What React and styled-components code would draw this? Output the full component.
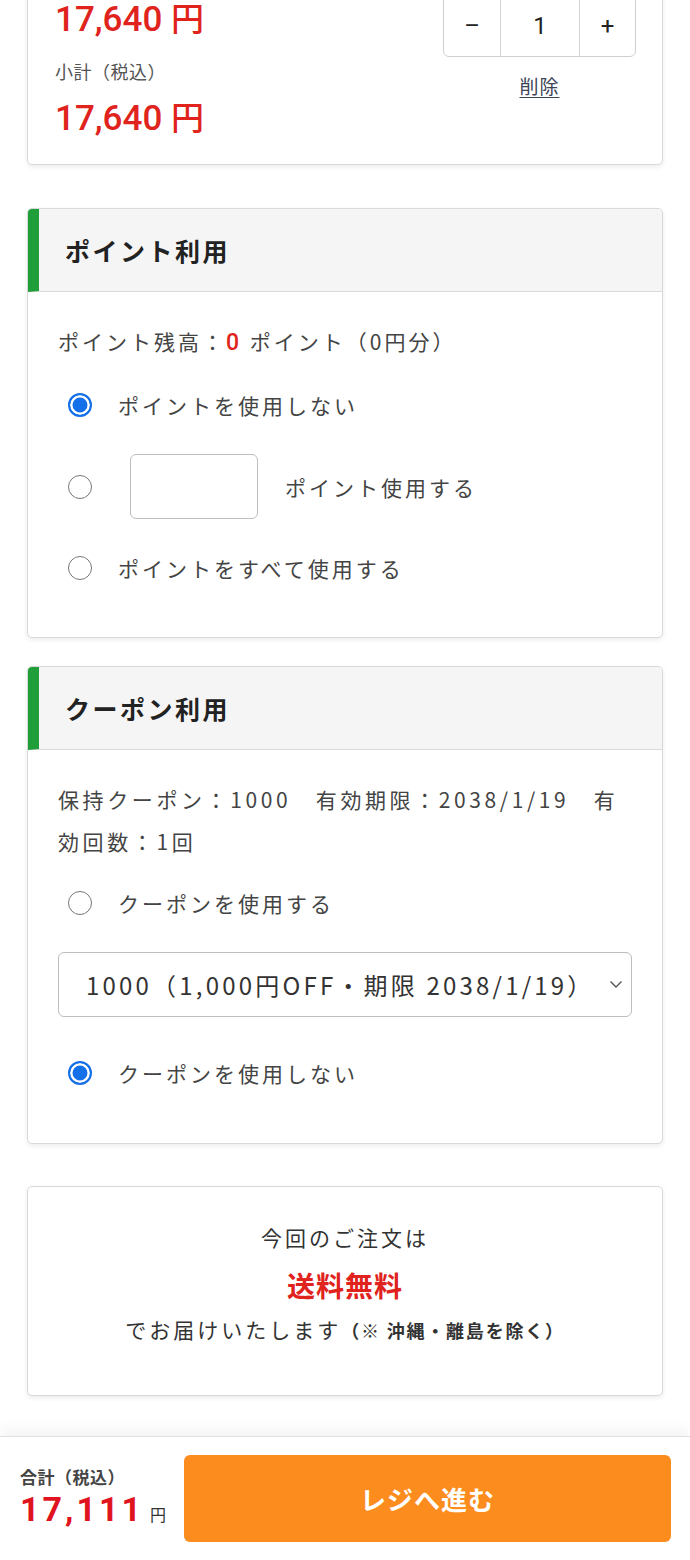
import React, { useState } from 'react';
import styled, { createGlobalStyle } from 'styled-components';

const GlobalStyle = createGlobalStyle`
  * { box-sizing: border-box; }
  body {
    margin: 0;
    background: #fff;
    color: #333;
    font-family: 'Noto Sans CJK JP', 'Noto Sans', sans-serif;
    overflow: hidden;
  }
`;

const Page = styled.div`
  width: 690px;
  height: 1560px;
  overflow: hidden;
  display: flex;
  flex-direction: column;
`;

const Content = styled.div`
  padding: 0 27px;
  display: flex;
  flex-direction: column;
`;

const Card = styled.section`
  background: #fff;
  border: 1px solid #d9d9d9;
  border-radius: 5px;
  box-shadow: 0 2px 5px rgba(0, 0, 0, 0.08);
  margin-top: ${(p) => p.$gap || 0}px;
  overflow: hidden;
`;

const ItemCard = styled(Card)`
  display: flex;
  justify-content: space-between;
  padding: 26px 26px 25px 27px;
`;

const PriceCol = styled.div`
  display: flex;
  flex-direction: column;
`;

const Price = styled.div`
  font-family: Roboto, 'Noto Sans CJK JP', sans-serif;
  font-weight: 500;
  font-size: 35px;
  line-height: 40px;
  color: #e0231c;
  span {
    font-family: 'Noto Sans CJK JP', sans-serif;
    font-size: 33px;
  }
`;

const SubLabel = styled.div`
  font-size: 18px;
  line-height: 26px;
  letter-spacing: 0.5px;
  color: #555;
  margin: 18px 0 12px;
`;

const QtyCol = styled.div`
  display: flex;
  flex-direction: column;
  align-items: center;
  margin-top: -2px;
`;

const Stepper = styled.div`
  display: flex;
  height: 62px;
  border: 1px solid #cfcfcf;
  border-radius: 6px;
  overflow: hidden;
`;

const StepCell = styled.div`
  width: ${(p) => p.$w}px;
  display: flex;
  align-items: center;
  justify-content: center;
  font-family: Roboto, sans-serif;
  font-size: 24px;
  color: #222;
  & + & {
    border-left: 1px solid #d6d6d6;
  }
`;

const DeleteLink = styled.a`
  margin-top: 17px;
  font-size: 19px;
  line-height: 24px;
  letter-spacing: 1px;
  color: #3b4454;
  text-decoration: underline;
  text-underline-offset: 3px;
`;

const CardHeader = styled.div`
  height: 83px;
  background: #f5f5f5;
  border-left: 11px solid #1f9e3a;
  border-bottom: 1px solid #dadada;
  display: flex;
  align-items: center;
  padding-left: 26px;
  font-size: 25px;
  font-weight: 700;
  letter-spacing: 2.5px;
  color: #222;
`;

const CardBody = styled.div`
  padding: 28px 30px ${(p) => p.$pb || 48}px;
  font-size: 21px;
  letter-spacing: 3px;
  color: #444;
`;

const InfoLine = styled.p`
  margin: 0 0 20px;
  line-height: 42px;
  letter-spacing: ${(p) => p.$ls || 3}px;
  b {
    color: #e0231c;
    font-family: Roboto, sans-serif;
    font-weight: 500;
    font-size: 23px;
  }
`;

const RadioRow = styled.label`
  display: flex;
  align-items: center;
  min-height: 42px;
  margin-top: ${(p) => p.$mt || 0}px;
  line-height: 42px;
`;

const Radio = styled.input.attrs({ type: 'radio' })`
  appearance: none;
  flex: none;
  width: 24px;
  height: 24px;
  margin: 0 26px 0 10px;
  border: 1.5px solid #777;
  border-radius: 50%;
  background: #fff;
  &:checked {
    border: 2px solid #1470e8;
    background: #1470e8;
    box-shadow: inset 0 0 0 2.5px #fff;
  }
`;

const PointInput = styled.input`
  width: 128px;
  height: 65px;
  margin: 0 27px 0 12px;
  border: 1px solid #bdbdbd;
  border-radius: 6px;
  font-size: 21px;
  padding: 0 10px;
`;

const SelectWrap = styled.div`
  position: relative;
  margin-top: 28px;
  svg {
    position: absolute;
    right: 9px;
    top: 28px;
    pointer-events: none;
  }
`;

const Select = styled.select`
  appearance: none;
  width: 100%;
  height: 65px;
  border: 1px solid #bdbdbd;
  border-radius: 6px;
  background: #fff;
  padding: 0 0 0 27px;
  font-family: 'Noto Sans CJK JP', sans-serif;
  font-size: 24px;
  letter-spacing: 3.2px;
  color: #333;
`;

const ShippingCard = styled(Card)`
  padding: 32px 20px 47px;
  text-align: center;
  font-size: 21px;
  letter-spacing: 3px;
  color: #333;
`;

const ShipLine = styled.div`
  line-height: ${(p) => p.$lh}px;
  margin-top: ${(p) => p.$mt || 0}px;
  small {
    font-size: 18px;
    font-weight: 700;
    letter-spacing: 1.8px;
  }
`;

const FreeShip = styled(ShipLine)`
  font-size: 28px;
  font-weight: 700;
  color: #e0231c;
  letter-spacing: 1px;
`;

const Footer = styled.footer`
  margin-top: 40px;
  flex: 1;
  background: #fff;
  border-top: 1px solid #e2e2e2;
  box-shadow: 0 -6px 14px rgba(0, 0, 0, 0.05);
  display: flex;
  align-items: flex-start;
  padding: 18px 19px 0 20px;
  gap: 18px;
`;

const TotalBox = styled.div`
  display: flex;
  flex-direction: column;
  padding-top: 10px;
`;

const TotalLabel = styled.div`
  font-size: 17px;
  font-weight: 700;
  line-height: 24px;
  letter-spacing: 0.5px;
  color: #444;
`;

const TotalPrice = styled.div`
  font-family: Roboto, sans-serif;
  font-weight: 700;
  font-size: 34px;
  line-height: 40px;
  letter-spacing: 3px;
  color: #e0141e;
  span {
    font-family: 'Noto Sans CJK JP', sans-serif;
    font-size: 16px;
    font-weight: 400;
    color: #333;
    letter-spacing: 0;
    margin-left: 6px;
  }
`;

const CheckoutButton = styled.button`
  flex: 1;
  height: 87px;
  border: none;
  border-radius: 6px;
  background: #fd8c1e;
  color: #fff;
  font-family: 'Noto Sans CJK JP', sans-serif;
  font-size: 26px;
  font-weight: 700;
  letter-spacing: 1px;
`;

const Chevron = () => (
  <svg width="14" height="9" viewBox="0 0 14 9" fill="none">
    <path d="M1.5 1.5 L7 7 L12.5 1.5" stroke="#555" strokeWidth="1.4" />
  </svg>
);

const App = () => {
  const [point, setPoint] = useState('none');
  const [coupon, setCoupon] = useState('none');

  return (
    <Page>
      <GlobalStyle />
      <Content>
        <ItemCard $gap={-30}>
          <PriceCol>
            <Price>
              17,640 <span>円</span>
            </Price>
            <SubLabel>小計（税込）</SubLabel>
            <Price>
              17,640 <span>円</span>
            </Price>
          </PriceCol>
          <QtyCol>
            <Stepper>
              <StepCell $w={56}>–</StepCell>
              <StepCell $w={79}>1</StepCell>
              <StepCell $w={56}>+</StepCell>
            </Stepper>
            <DeleteLink>削除</DeleteLink>
          </QtyCol>
        </ItemCard>

        <Card $gap={43}>
          <CardHeader>ポイント利用</CardHeader>
          <CardBody>
            <InfoLine>
              ポイント残高：<b>0</b> ポイント（0円分）
            </InfoLine>
            <RadioRow>
              <Radio
                name='point'
                checked={point === 'none'}
                onChange={() => setPoint('none')}
              />
              ポイントを使用しない
            </RadioRow>
            <RadioRow $mt={28}>
              <Radio
                name='point'
                checked={point === 'some'}
                onChange={() => setPoint('some')}
              />
              <PointInput type='text' />
              ポイント使用する
            </RadioRow>
            <RadioRow $mt={28}>
              <Radio
                name='point'
                checked={point === 'all'}
                onChange={() => setPoint('all')}
              />
              ポイントをすべて使用する
            </RadioRow>
          </CardBody>
        </Card>

        <Card $gap={28}>
          <CardHeader>クーポン利用</CardHeader>
          <CardBody $pb={49}>
            <InfoLine $ls={3.6}>
              保持クーポン：1000　有効期限：2038/1/19　有効回数：1回
            </InfoLine>
            <RadioRow>
              <Radio
                name='coupon'
                checked={coupon === 'use'}
                onChange={() => setCoupon('use')}
              />
              クーポンを使用する
            </RadioRow>
            <SelectWrap>
              <Select defaultValue='1000'>
                <option value='1000'>1000（1,000円OFF・期限 2038/1/19）</option>
              </Select>
              <Chevron />
            </SelectWrap>
            <RadioRow $mt={35}>
              <Radio
                name='coupon'
                checked={coupon === 'none'}
                onChange={() => setCoupon('none')}
              />
              クーポンを使用しない
            </RadioRow>
          </CardBody>
        </Card>

        <ShippingCard $gap={42}>
          <ShipLine $lh={36}>今回のご注文は</ShipLine>
          <FreeShip $lh={46} $mt={7}>
            送料無料
          </FreeShip>
          <ShipLine $lh={36} $mt={3}>
            でお届けいたします<small>（※ 沖縄・離島を除く）</small>
          </ShipLine>
        </ShippingCard>
      </Content>

      <Footer>
        <TotalBox>
          <TotalLabel>合計（税込）</TotalLabel>
          <TotalPrice>
            17,111<span>円</span>
          </TotalPrice>
        </TotalBox>
        <CheckoutButton>レジへ進む</CheckoutButton>
      </Footer>
    </Page>
  );
};

export default App;
